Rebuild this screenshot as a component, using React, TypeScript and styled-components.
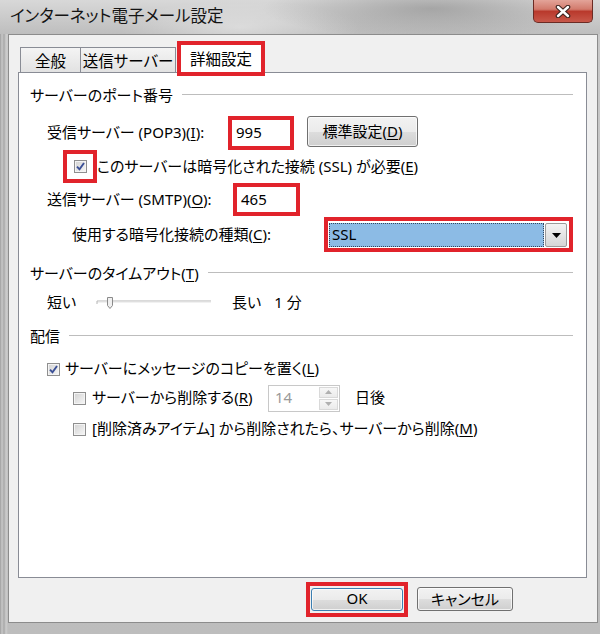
import styled, { createGlobalStyle } from 'styled-components'

const RED = '#e1232b'

const GlobalStyle = createGlobalStyle`
  html, body {
    margin: 0;
    padding: 0;
  }
  body {
    width: 600px;
    height: 634px;
    overflow: hidden;
    font-family: "Noto Sans", "Noto Sans CJK JP", sans-serif;
    font-feature-settings: "palt";
    color: #000;
  }
`

const Window = styled.div`
  width: 600px;
  height: 634px;
  display: flex;
  flex-direction: column;
  background:
    linear-gradient(90deg, #9d9d9d 0px, #c9c9c9 2px, #a8a8a8 4px, #cdcdcd 6px, transparent 8px),
    linear-gradient(180deg, #c9c9c9, #bdbdbd);
`

const TitleBar = styled.div`
  height: 34px;
  display: flex;
  align-items: flex-start;
  flex-shrink: 0;
  background:
    radial-gradient(ellipse 170px 30px at 72% 25%, rgba(100, 100, 100, 0.4), transparent),
    radial-gradient(ellipse 120px 26px at 40% 80%, rgba(255, 255, 255, 0.4), transparent),
    linear-gradient(180deg, #d8d8d8, #bebebe);
`

const Title = styled.div`
  margin: 4px 0 0 10px;
  font-size: 16.5px;
  line-height: 24px;
  color: #141414;
`

const CloseButton = styled.div`
  margin: 0 7px 0 auto;
  width: 60px;
  height: 23px;
  box-sizing: border-box;
  border: 1px solid #6b2b24;
  border-top: none;
  border-radius: 0 0 5px 5px;
  background: linear-gradient(180deg, #e3a499 0%, #d27a6c 42%, #b9392c 52%, #c8584a 100%);
  display: flex;
  align-items: center;
  justify-content: center;
`

const Body = styled.div`
  flex: 1;
  display: flex;
  padding: 0 7px 11px 8px;
`

const Client = styled.div`
  flex: 1;
  display: flex;
  flex-direction: column;
  background: #f0f0f0;
  border: 1px solid #8c8c8c;
  padding: 6px 10px 0 9px;
`

const TabRow = styled.div`
  height: 31px;
  display: flex;
  align-items: flex-end;
  padding-left: 2px;
  position: relative;
  z-index: 1;
`

const Tab = styled.div<{ $w: number }>`
  width: ${({ $w }) => $w}px;
  height: 25px;
  box-sizing: border-box;
  border: 1px solid #898c95;
  border-bottom: none;
  background: linear-gradient(180deg, #f4f4f4, #e2e2e2);
  display: flex;
  align-items: center;
  justify-content: center;
  font-size: 15.5px;
  & + & {
    margin-left: -1px;
  }
`

const ActiveTab = styled.div`
  width: 88px;
  height: 35px;
  margin: 0 0 -4px 1px;
  box-sizing: border-box;
  border: 4px solid ${RED};
  background: #fff;
  display: flex;
  align-items: center;
  justify-content: center;
  font-size: 15.5px;
`

const Panel = styled.div`
  height: 506px;
  box-sizing: border-box;
  border: 1px solid #898c95;
  background: #fff;
  padding: 4px 13px 0 11px;
  display: flex;
  flex-direction: column;
`

const Section = styled.div<{ $h: number; $mt?: number; $pb?: number }>`
  height: ${({ $h }) => $h}px;
  margin-top: ${({ $mt = 0 }) => $mt}px;
  padding-bottom: ${({ $pb = 0 }) => $pb}px;
  display: flex;
  align-items: center;
  gap: 9px;
  font-size: 15px;
  white-space: nowrap;
  &::after {
    content: '';
    flex: 1;
    height: 1px;
    background: #bdbdbd;
  }
`

const Row = styled.div<{ $h: number; $mt?: number; $indent: number }>`
  height: ${({ $h }) => $h}px;
  margin-top: ${({ $mt = 0 }) => $mt}px;
  padding-left: ${({ $indent }) => $indent}px;
  display: flex;
  align-items: center;
  font-size: 15px;
  white-space: nowrap;
`

const Label = styled.span<{ $w?: number; $ml?: number }>`
  flex-shrink: 0;
  width: ${({ $w }) => ($w ? `${$w}px` : 'auto')};
  margin-left: ${({ $ml = 0 }) => $ml}px;
  padding-bottom: 3px;
`

const U = styled.span`
  text-decoration: underline;
  text-underline-offset: 2px;
  text-decoration-thickness: 1px;
`

const Highlight = styled.div<{ $w: number; $h: number }>`
  width: ${({ $w }) => $w}px;
  height: ${({ $h }) => $h}px;
  box-sizing: border-box;
  border: 4px solid ${RED};
  background: #fff;
  display: flex;
  align-items: center;
  flex-shrink: 0;
`

const FieldText = styled.span`
  padding: 0 0 2px 4px;
  font-size: 15px;
`

const Button = styled.div<{ $w: number; $h: number; $default?: boolean }>`
  width: ${({ $w }) => $w}px;
  height: ${({ $h }) => $h}px;
  box-sizing: border-box;
  border: 1px solid ${({ $default }) => ($default ? '#3c7fb1' : '#707070')};
  border-radius: 3px;
  background: linear-gradient(180deg, #f2f2f2 0%, #ebebeb 50%, #dddddd 51%, #cfcfcf 100%);
  box-shadow: inset 0 0 0 1px rgba(255, 255, 255, 0.7);
  display: flex;
  align-items: center;
  justify-content: center;
  padding-bottom: 2px;
  font-size: 15px;
  flex-shrink: 0;
`

const Box = styled.span`
  width: 13px;
  height: 13px;
  box-sizing: border-box;
  flex-shrink: 0;
  border: 1px solid #8f8f8f;
  background: linear-gradient(135deg, #d2d2d2, #f7f7f7);
  box-shadow: inset 0 0 0 1px #f4f4f4;
  display: flex;
  align-items: center;
  justify-content: center;
`

const CheckCell = styled(Highlight)`
  justify-content: center;
`

const SelectInner = styled.div`
  flex: 1;
  height: 100%;
  display: flex;
  padding: 2px 2px 1px 1px;
  box-sizing: border-box;
`

const SelectValue = styled.div`
  flex: 1;
  background: #8cbbe5;
  outline: 1px dotted #34475e;
  outline-offset: -1px;
  display: flex;
  align-items: center;
  padding: 0 0 2px 3px;
  font-size: 15px;
`

const SelectArrow = styled.div`
  width: 20px;
  margin-left: 1px;
  border: 1px solid #9a9a9a;
  border-radius: 2px;
  background: linear-gradient(180deg, #f3f3f3, #d6d6d6);
  display: flex;
  align-items: center;
  justify-content: center;
`

const Spin = styled.div`
  width: 72px;
  height: 27px;
  box-sizing: border-box;
  border: 1px solid #c8c8c8;
  display: flex;
  flex-shrink: 0;
`

const SpinValue = styled.div`
  flex: 1;
  display: flex;
  align-items: center;
  padding: 0 0 2px 6px;
  color: #9a9a9a;
  font-size: 15px;
`

const SpinButtons = styled.div`
  width: 21px;
  display: flex;
  flex-direction: column;
  gap: 1px;
  padding: 1px;
  box-sizing: border-box;
`

const SpinHalf = styled.div`
  flex: 1;
  border: 1px solid #d9d9d9;
  background: linear-gradient(180deg, #f7f7f7, #ebebeb);
  display: flex;
  align-items: center;
  justify-content: center;
`

const Footer = styled.div`
  flex: 1;
  display: flex;
  align-items: center;
  justify-content: flex-end;
  gap: 9px;
  padding: 0 74px 2px 0;
`

const OkHighlight = styled.div`
  border: 4px solid ${RED};
  padding: 2px 1px;
  display: flex;
`

function CheckBox({ checked }: { checked?: boolean }) {
  return (
    <Box>
      {checked && (
        <svg width="9" height="9" viewBox="0 0 9 9">
          <path d="M1 4.6 L3.5 7.3 L8 1" fill="none" stroke="#3a4f96" strokeWidth="1.9" />
        </svg>
      )}
    </Box>
  )
}

function Slider() {
  return (
    <svg width="116" height="14" viewBox="0 0 116 14" style={{ flexShrink: 0 }}>
      <path d="M1 5 H115" stroke="#b5b5b5" strokeWidth="1" />
      <path d="M1 6 H115" stroke="#e4e4e4" strokeWidth="1" />
      <path d="M1 5 V8" stroke="#b5b5b5" strokeWidth="1" />
      <path d="M11.5 1.5 H16.5 V9.5 L14 12.5 L11.5 9.5 Z" fill="#f0f0f0" stroke="#8a8a8a" strokeWidth="1" />
    </svg>
  )
}

export default function App() {
  return (
    <>
      <GlobalStyle />
      <Window>
        <TitleBar>
          <Title>インターネット電子メール設定</Title>
          <CloseButton>
            <svg width="16" height="13" viewBox="0 0 16 13">
              <path d="M3 2 L13 11 M13 2 L3 11" stroke="#3d2420" strokeWidth="4.6" strokeLinecap="round" />
              <path d="M3 2 L13 11 M13 2 L3 11" stroke="#fff" strokeWidth="2.4" strokeLinecap="round" />
            </svg>
          </CloseButton>
        </TitleBar>
        <Body>
          <Client>
            <TabRow>
              <Tab $w={61}>全般</Tab>
              <Tab $w={96}>送信サーバー</Tab>
              <ActiveTab>詳細設定</ActiveTab>
            </TabRow>
            <Panel>
              <Section $h={35} $pb={4}>サーバーのポート番号</Section>

              <Row $h={34} $indent={17}>
                <Label $w={181}>
                  受信サーバー (POP3)(<U>I</U>):
                </Label>
                <Highlight $w={66} $h={34}>
                  <FieldText>995</FieldText>
                </Highlight>
                <Label $ml={13}>
                  <Button $w={111} $h={31}>
                    標準設定(<U>D</U>)
                  </Button>
                </Label>
              </Row>

              <Row $h={33} $indent={33}>
                <CheckCell $w={34} $h={33}>
                  <CheckBox checked />
                </CheckCell>
                <Label>
                  このサーバーは暗号化された接続 (SSL) が必要(<U>E</U>)
                </Label>
              </Row>

              <Row $h={33} $indent={17}>
                <Label $w={186}>
                  送信サーバー (SMTP)(<U>O</U>):
                </Label>
                <Highlight $w={67} $h={33}>
                  <FieldText>465</FieldText>
                </Highlight>
              </Row>

              <Row $h={35} $mt={1} $indent={42}>
                <Label $w={252}>
                  使用する暗号化接続の種類(<U>C</U>):
                </Label>
                <Highlight $w={249} $h={35}>
                  <SelectInner>
                    <SelectValue>SSL</SelectValue>
                    <SelectArrow>
                      <svg width="9" height="5" viewBox="0 0 9 5">
                        <path d="M0 0 H9 L4.5 5 Z" fill="#000" />
                      </svg>
                    </SelectArrow>
                  </SelectInner>
                </Highlight>
              </Row>

              <Section $h={28} $mt={6} $pb={3}>
                <span>
                  サーバーのタイムアウト(<U>T</U>)
                </span>
              </Section>

              <Row $h={28} $indent={17}>
                <Label $w={49}>短い</Label>
                <Slider />
                <Label $ml={20}>長い</Label>
                <Label $ml={13}>1 分</Label>
              </Row>

              <Section $h={28} $mt={4} $pb={3}>配信</Section>

              <Row $h={28} $mt={3} $indent={17}>
                <CheckBox checked />
                <Label $ml={5}>
                  サーバーにメッセージのコピーを置く(<U>L</U>)
                </Label>
              </Row>

              <Row $h={28} $mt={1} $indent={43}>
                <CheckBox />
                <Label $w={176} $ml={6}>
                  サーバーから削除する(<U>R</U>)
                </Label>
                <Spin>
                  <SpinValue>14</SpinValue>
                  <SpinButtons>
                    <SpinHalf>
                      <svg width="7" height="4" viewBox="0 0 7 4">
                        <path d="M0 4 H7 L3.5 0 Z" fill="#b0b0b0" />
                      </svg>
                    </SpinHalf>
                    <SpinHalf>
                      <svg width="7" height="4" viewBox="0 0 7 4">
                        <path d="M0 0 H7 L3.5 4 Z" fill="#b0b0b0" />
                      </svg>
                    </SpinHalf>
                  </SpinButtons>
                </Spin>
                <Label $ml={15}>日後</Label>
              </Row>

              <Row $h={28} $mt={3} $indent={43}>
                <CheckBox />
                <Label $ml={6}>
                  [削除済みアイテム] から削除されたら、サーバーから削除(<U>M</U>)
                </Label>
              </Row>
            </Panel>
            <Footer>
              <OkHighlight>
                <Button $w={92} $h={23} $default>
                  OK
                </Button>
              </OkHighlight>
              <Button $w={96} $h={24}>
                キャンセル
              </Button>
            </Footer>
          </Client>
        </Body>
      </Window>
    </>
  )
}
